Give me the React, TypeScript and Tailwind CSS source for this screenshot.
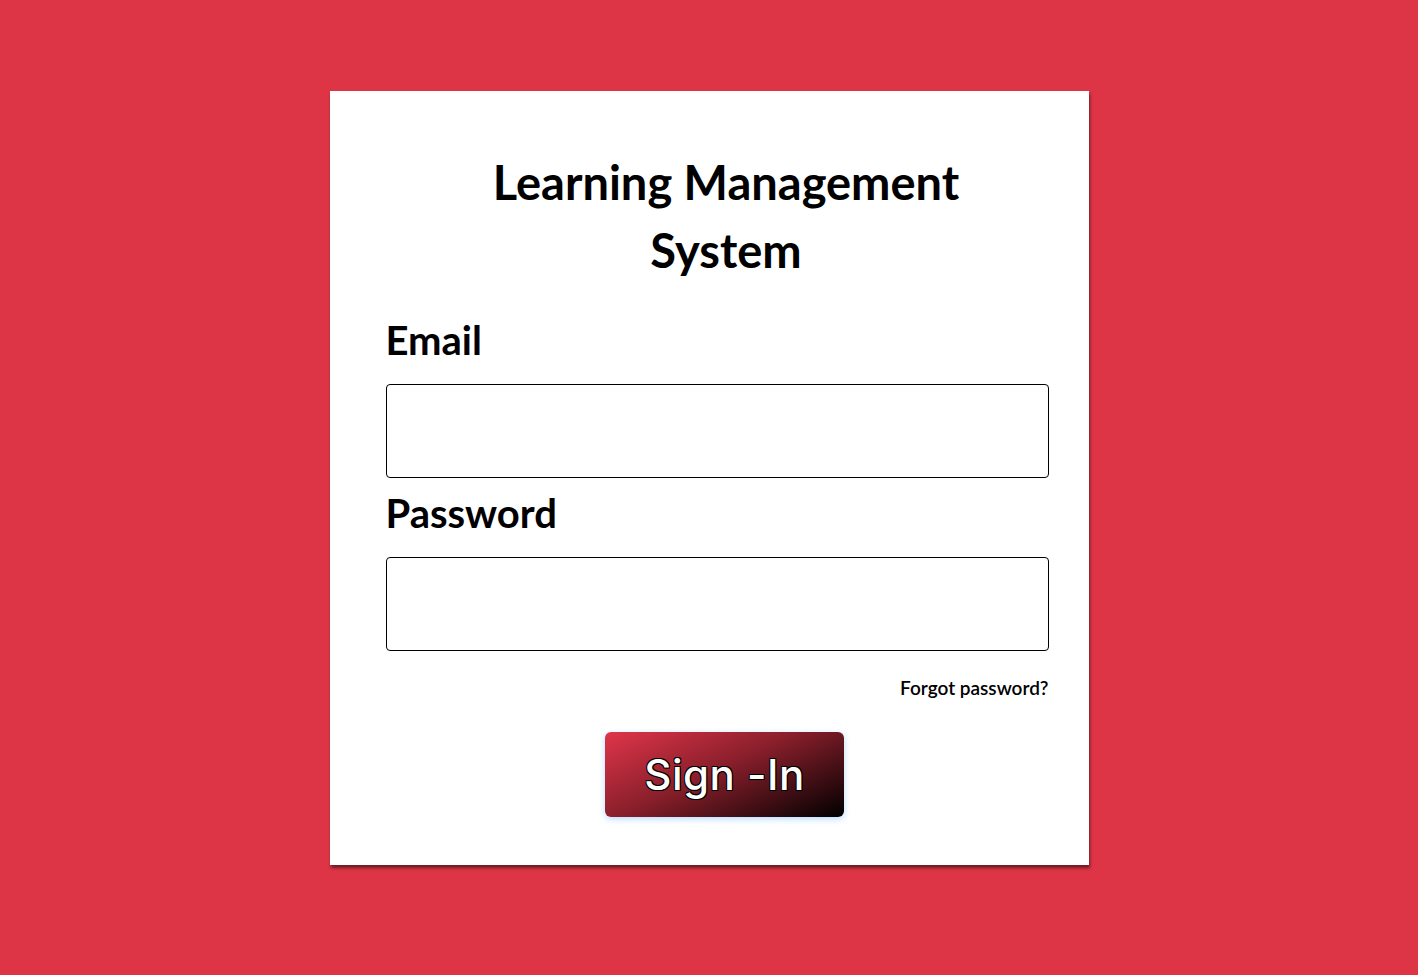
export default function App() {
  return (
    <div className="min-h-screen w-full bg-[#de3546] flex justify-center pt-[91px]" style={{ fontFamily: '"Lato", "Noto Sans", sans-serif' }}>
      <div className="w-[759px] h-[774px] bg-white shadow-[1px_3px_3px_rgba(0,0,0,0.5)] pl-[56px] pr-[40px] pt-[57px] flex flex-col">
        <h1 className="self-center w-[520px] ml-[18px] text-center text-[47px] leading-[68px] font-bold text-black">
          Learning Management System
        </h1>
        <form className="flex flex-col mt-[32px]" onSubmit={(e) => e.preventDefault()}>
          <label className="text-[40px] leading-[48px] font-bold text-black">Email</label>
          <input type="email" className="mt-[20px] h-[94px] w-full border border-black rounded-[4px] outline-none px-3" />
          <label className="mt-[11px] text-[40px] leading-[48px] font-bold text-black">Password</label>
          <input type="password" className="mt-[20px] h-[94px] w-full border border-black rounded-[4px] outline-none px-3" />
          <a href="#" className="self-end mt-[25px] text-[19px] leading-[24px] font-semibold text-black">Forgot password?</a>
          <div className="flex justify-center mt-[32px] pl-[15px]">
            <button
              type="submit"
              className="w-[239px] h-[85px] rounded-[6px] bg-[linear-gradient(155deg,#e0354a_0%,#8a1f2b_45%,#000000_100%)] shadow-[0_2px_6px_rgba(120,190,255,0.55)] text-white text-[42px] font-medium tracking-[0.5px] [text-shadow:-1px_-1px_0_#000,1px_-1px_0_#000,-1px_1px_0_#000,1px_1px_0_#000]"
              style={{ fontFamily: '"Inter", "Noto Sans", sans-serif' }}
            >
              Sign -In
            </button>
          </div>
        </form>
      </div>
    </div>
  );
}
